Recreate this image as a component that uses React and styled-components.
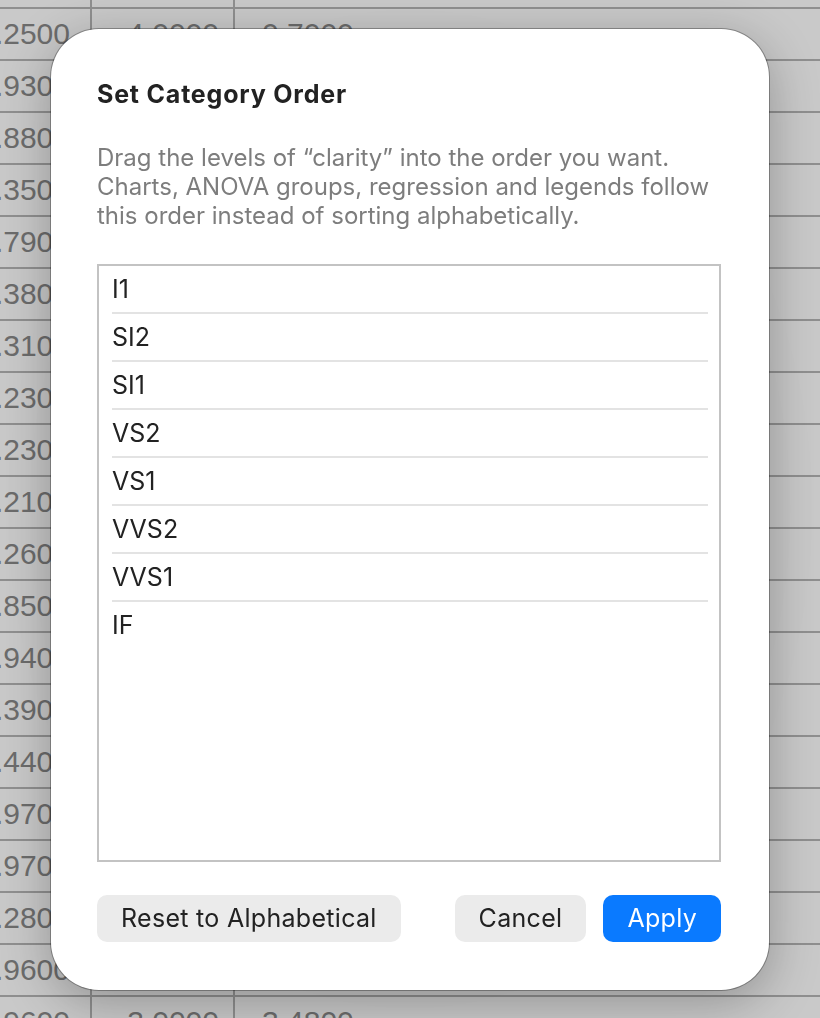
import React from 'react'
import styled, { createGlobalStyle } from 'styled-components'

const GlobalStyle = createGlobalStyle`
  html, body {
    margin: 0;
    padding: 0;
    height: 100%;
    overflow: hidden;
    background: #c8c8c8;
  }
  * { box-sizing: border-box; }
`

const rows = [
  ['0.2200', '3.0000', '0.5000'],
  ['0.2500', '4.0000', '0.7000'],
  ['1.9300', '3.0000', '1.0600'],
  ['1.8800', '2.0000', '0.8200'],
  ['1.3500', '4.0000', '1.1000'],
  ['1.7900', '3.0000', '0.9400'],
  ['1.3800', '2.0000', '0.8700'],
  ['1.3100', '3.0000', '1.0100'],
  ['1.2300', '4.0000', '0.6400'],
  ['1.2300', '3.0000', '0.6900'],
  ['1.2100', '2.0000', '0.7700'],
  ['1.2600', '4.0000', '0.9900'],
  ['1.8500', '3.0000', '1.1300'],
  ['1.9400', '3.0000', '0.9800'],
  ['1.3900', '2.0000', '0.8500'],
  ['1.4400', '4.0000', '0.7900'],
  ['1.9700', '3.0000', '1.0400'],
  ['1.9700', '2.0000', '0.9600'],
  ['1.2800', '3.0000', '0.8300'],
  ['0.9600', '4.0000', '1.0200'],
  ['2.9600', '3.0000', '3.4800'],
]

const levels = ['I1', 'SI2', 'SI1', 'VS2', 'VS1', 'VVS2', 'VVS1', 'IF']

export default function App() {
  return (
    <>
      <GlobalStyle />
      <Viewport>
        <Sheet>
          {rows.map((row, i) => (
            <React.Fragment key={i}>
              <Cell first>{row[0]}</Cell>
              <Cell>{row[1]}</Cell>
              <Cell wide>{row[2]}</Cell>
            </React.Fragment>
          ))}
        </Sheet>
      </Viewport>
      <Overlay>
        <Dialog>
          <Title>Set Category Order</Title>
          <Description>
            Drag the levels of “clarity” into the order you want.
            <br />
            Charts, ANOVA groups, regression and legends follow
            <br />
            this order instead of sorting alphabetically.
          </Description>
          <LevelList>
            {levels.map((level, i) => (
              <LevelRow key={level} divided={i < levels.length - 1}>
                {level}
              </LevelRow>
            ))}
          </LevelList>
          <Footer>
            <Button>Reset to Alphabetical</Button>
            <Spacer />
            <Button>Cancel</Button>
            <Button primary>Apply</Button>
          </Footer>
        </Dialog>
      </Overlay>
    </>
  )
}

const Viewport = styled.div`
  height: 100vh;
  overflow: hidden;
`
const Sheet = styled.div`
  display: grid;
  grid-template-columns: 92px 143px 1fr;
  grid-auto-rows: 52px;
  margin-top: -43px;
  width: 100%;
  background: #c9c9c9;
`
const Cell = styled.div`
  display: flex;
  justify-content: ${p => (p.wide ? 'flex-start' : 'flex-end')};
  align-items: center;
  padding: ${p => (p.wide ? '0 0 0 27px' : p.first ? '0 20px 0 0' : '0 14px 0 0')};
  overflow: hidden;
  white-space: nowrap;
  border-bottom: 2px solid #8f8f8f;
  border-right: ${p => (p.wide ? 'none' : '2px solid #8f8f8f')};
  font-family: "Liberation Sans", Arial, sans-serif;
  font-size: 30px;
  color: #6c6c6c;
`
const Overlay = styled.div`
  position: fixed;
  inset: 0;
  display: flex;
  align-items: center;
  justify-content: center;
  background: radial-gradient(ellipse at center, rgba(0, 0, 0, 0.08), rgba(0, 0, 0, 0) 75%);
`
const Dialog = styled.div`
  width: 718px;
  display: flex;
  flex-direction: column;
  padding: 50px 48px 48px 46px;
  background: #ffffff;
  border-radius: 48px;
  box-shadow: 0 0 0 1px rgba(0, 0, 0, 0.3), 0 12px 50px rgba(0, 0, 0, 0.28);
  font-family: Inter, "Noto Sans", sans-serif;
`
const Title = styled.h2`
  margin: 0;
  font-size: 25px;
  line-height: 30px;
  font-weight: 700;
  letter-spacing: 0.8px;
  color: #222222;
`
const Description = styled.p`
  margin: 34px 0 0;
  font-size: 24px;
  line-height: 29px;
  color: #7d7d7d;
`
const LevelList = styled.div`
  margin-top: 34px;
  height: 598px;
  border: 2px solid #c3c3c3;
  display: flex;
  flex-direction: column;
  padding: 0 11px 0 13px;
`
const LevelRow = styled.div`
  height: 48px;
  display: flex;
  align-items: center;
  padding-top: 1px;
  font-size: 25px;
  color: #222222;
  border-bottom: 2px solid ${p => (p.divided ? '#e3e3e3' : 'transparent')};
`
const Footer = styled.div`
  display: flex;
  align-items: center;
  gap: 17px;
  margin-top: 33px;
`
const Spacer = styled.div`
  flex: 1;
`
const Button = styled.button`
  height: 47px;
  padding: 0 24px;
  border: none;
  border-radius: 10px;
  font-family: Inter, "Noto Sans", sans-serif;
  font-size: 25px;
  letter-spacing: 0.3px;
  background: ${p => (p.primary ? '#0a7aff' : '#ebebeb')};
  color: ${p => (p.primary ? '#ffffff' : '#222222')};
`
